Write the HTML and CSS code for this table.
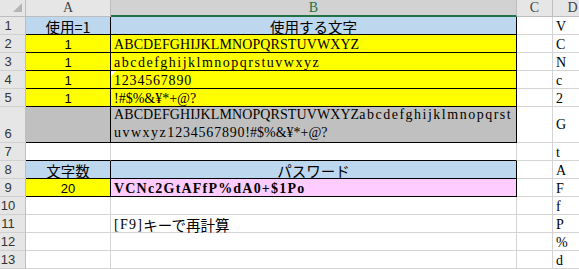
FILE: index.html
```html
<!DOCTYPE html>
<html lang="ja">
<head>
<meta charset="utf-8">
<title>パスワード生成</title>
<link rel="stylesheet" href="styles.css">
</head>
<body>
<div class="sheet">
  <!-- column headers -->
  <div class="h corner"><svg width="9" height="9" viewBox="0 0 9 9"><polygon points="9,0 9,9 0,9" fill="#b5b5b5"/></svg></div>
  <div class="h col">A</div>
  <div class="h col sel">B</div>
  <div class="h col">C</div>
  <div class="h col">D</div>

  <!-- 1 -->
  <div class="rn">1</div>
  <div class="c blue bk mid jp">使用=1</div>
  <div class="c blue bk mid jp">使用する文字</div>
  <div class="c"></div>
  <div class="c">V</div>

  <!-- 2 -->
  <div class="rn">2</div>
  <div class="c yel bk mid num">1</div>
  <div class="c yel bk"><span class="up">ABCDEFGHIJKLMNOPQRSTUVWXYZ</span></div>
  <div class="c"></div>
  <div class="c">C</div>

  <!-- 3 -->
  <div class="rn">3</div>
  <div class="c yel bk mid num">1</div>
  <div class="c yel bk"><span class="lo">abcdefghijklmnopqrstuvwxyz</span></div>
  <div class="c"></div>
  <div class="c">N</div>

  <!-- 4 -->
  <div class="rn">4</div>
  <div class="c yel bk mid num">1</div>
  <div class="c yel bk flag"><span class="dg">1234567890</span></div>
  <div class="c"></div>
  <div class="c">c</div>

  <!-- 5 -->
  <div class="rn">5</div>
  <div class="c yel bk mid num">1</div>
  <div class="c yel bk"><span class="sy">!#$%&amp;¥*+@?</span></div>
  <div class="c"></div>
  <div class="c">2</div>

  <!-- 6 -->
  <div class="rn">6</div>
  <div class="c gray bk"></div>
  <div class="c gray bk wrap"><p class="all"><span class="up">ABCDEFGHIJKLMNOPQRSTUVWXYZ</span><span class="lo">abcdefghijklmnopqrst</span><span class="lo">uvwxyz</span><span class="dg">1234567890</span><span class="sy">!#$%&amp;¥*+@?</span></p></div>
  <div class="c"></div>
  <div class="c vmid">G</div>

  <!-- 7 -->
  <div class="rn">7</div>
  <div class="c bk-b"></div>
  <div class="c bk-b"></div>
  <div class="c"></div>
  <div class="c">t</div>

  <!-- 8 -->
  <div class="rn">8</div>
  <div class="c blue bk mid jp">文字数</div>
  <div class="c blue bk mid jp">パスワード</div>
  <div class="c"></div>
  <div class="c">A</div>

  <!-- 9 -->
  <div class="rn">9</div>
  <div class="c yel bk mid num">20</div>
  <div class="c pink bk"><span class="pw">VCNc2GtAFfP%dA0+$1Po</span></div>
  <div class="c"></div>
  <div class="c">F</div>

  <!-- 10 -->
  <div class="rn">10</div>
  <div class="c"></div>
  <div class="c"></div>
  <div class="c"></div>
  <div class="c">f</div>

  <!-- 11 -->
  <div class="rn">11</div>
  <div class="c"></div>
  <div class="c"><span class="key">[F9]</span><span class="jp">キーで再計算</span></div>
  <div class="c"></div>
  <div class="c">P</div>

  <!-- 12 -->
  <div class="rn">12</div>
  <div class="c"></div>
  <div class="c"></div>
  <div class="c"></div>
  <div class="c">%</div>

  <!-- 13 -->
  <div class="rn">13</div>
  <div class="c"></div>
  <div class="c"></div>
  <div class="c"></div>
  <div class="c">d</div>
</div>
</body>
</html>
```

FILE: styles.css
```css
* {
  box-sizing: border-box;
}

html,
body {
  margin: 0;
  padding: 0;
  background: #ffffff;
}

body {
  width: 579px;
  height: 269px;
  overflow: hidden;
}

/* worksheet grid: row header, A, B, C, D */
.sheet {
  display: grid;
  grid-template-columns: 26px 85px 406px 36px 40px;
  grid-template-rows: 17px repeat(5, 18px) 36px repeat(7, 18px);
  font-family: "Liberation Serif", serif;
  font-size: 14px;
  color: #000000;
}

/* column header strip */
.h {
  display: flex;
  align-items: center;
  justify-content: center;
  background: #e6e6e6;
  border-right: 1px solid #bdbdbd;
  border-bottom: 1px solid #bdbdbd;
  color: #444444;
  font-size: 14px;
  line-height: 16px;
}

.corner {
  justify-content: flex-end;
  align-items: flex-end;
  padding: 0 3px 4px 0;
}

.corner svg {
  display: block;
}

.h.sel {
  background: #d2d2d2;
  color: #217346;
  border-bottom: 2px solid #217346;
}

/* row numbers */
.rn {
  display: flex;
  align-items: flex-end;
  justify-content: center;
  padding: 0 9px 1px 0;
  background: #e6e6e6;
  border-right: 1px solid #bdbdbd;
  border-bottom: 1px solid #d0d0d0;
  font-family: "Liberation Sans", Arial, sans-serif;
  font-size: 13px;
  line-height: 15px;
  color: #333333;
}

/* body cells */
.c {
  position: relative;
  display: flex;
  align-items: flex-end;
  padding: 0 3px 0;
  border-right: 1px solid #d4d4d4;
  border-bottom: 1px solid #d4d4d4;
  white-space: nowrap;
  line-height: 15px;
}

.mid {
  justify-content: center;
}

.vmid {
  align-items: center;
}

.blue {
  background: #bdd7ee;
}

.yel {
  background: #ffff00;
}

.gray {
  background: #c0c0c0;
}

.pink {
  background: #ffccff;
}

/* black cell borders of the input tables */
.bk {
  border-right-color: #000000;
  border-bottom-color: #000000;
}

.bk-b {
  border-bottom-color: #000000;
}

/* small indicator in the corner of a cell */
.flag::before {
  content: "";
  position: absolute;
  left: 0;
  top: 0;
  border-top: 5px solid #ffffff;
  border-right: 5px solid transparent;
}

.jp {
  font-family: "Noto Sans CJK JP", sans-serif;
  font-size: 14.5px;
}

.num {
  font-family: "Liberation Sans", Arial, sans-serif;
  font-size: 13px;
}

/* character runs */
.up {
  letter-spacing: 0.1px;
}

.lo {
  letter-spacing: 1.5px;
}

.dg {
  letter-spacing: 0.8px;
}

.sy {
  letter-spacing: 0;
}

.pw {
  font-weight: bold;
  letter-spacing: 1.2px;
}

.key {
  letter-spacing: 1.3px;
}

/* wrapped text cell */
.wrap {
  white-space: normal;
}

.wrap .all {
  margin: 0;
  line-height: 18px;
  word-break: break-all;
}
```
